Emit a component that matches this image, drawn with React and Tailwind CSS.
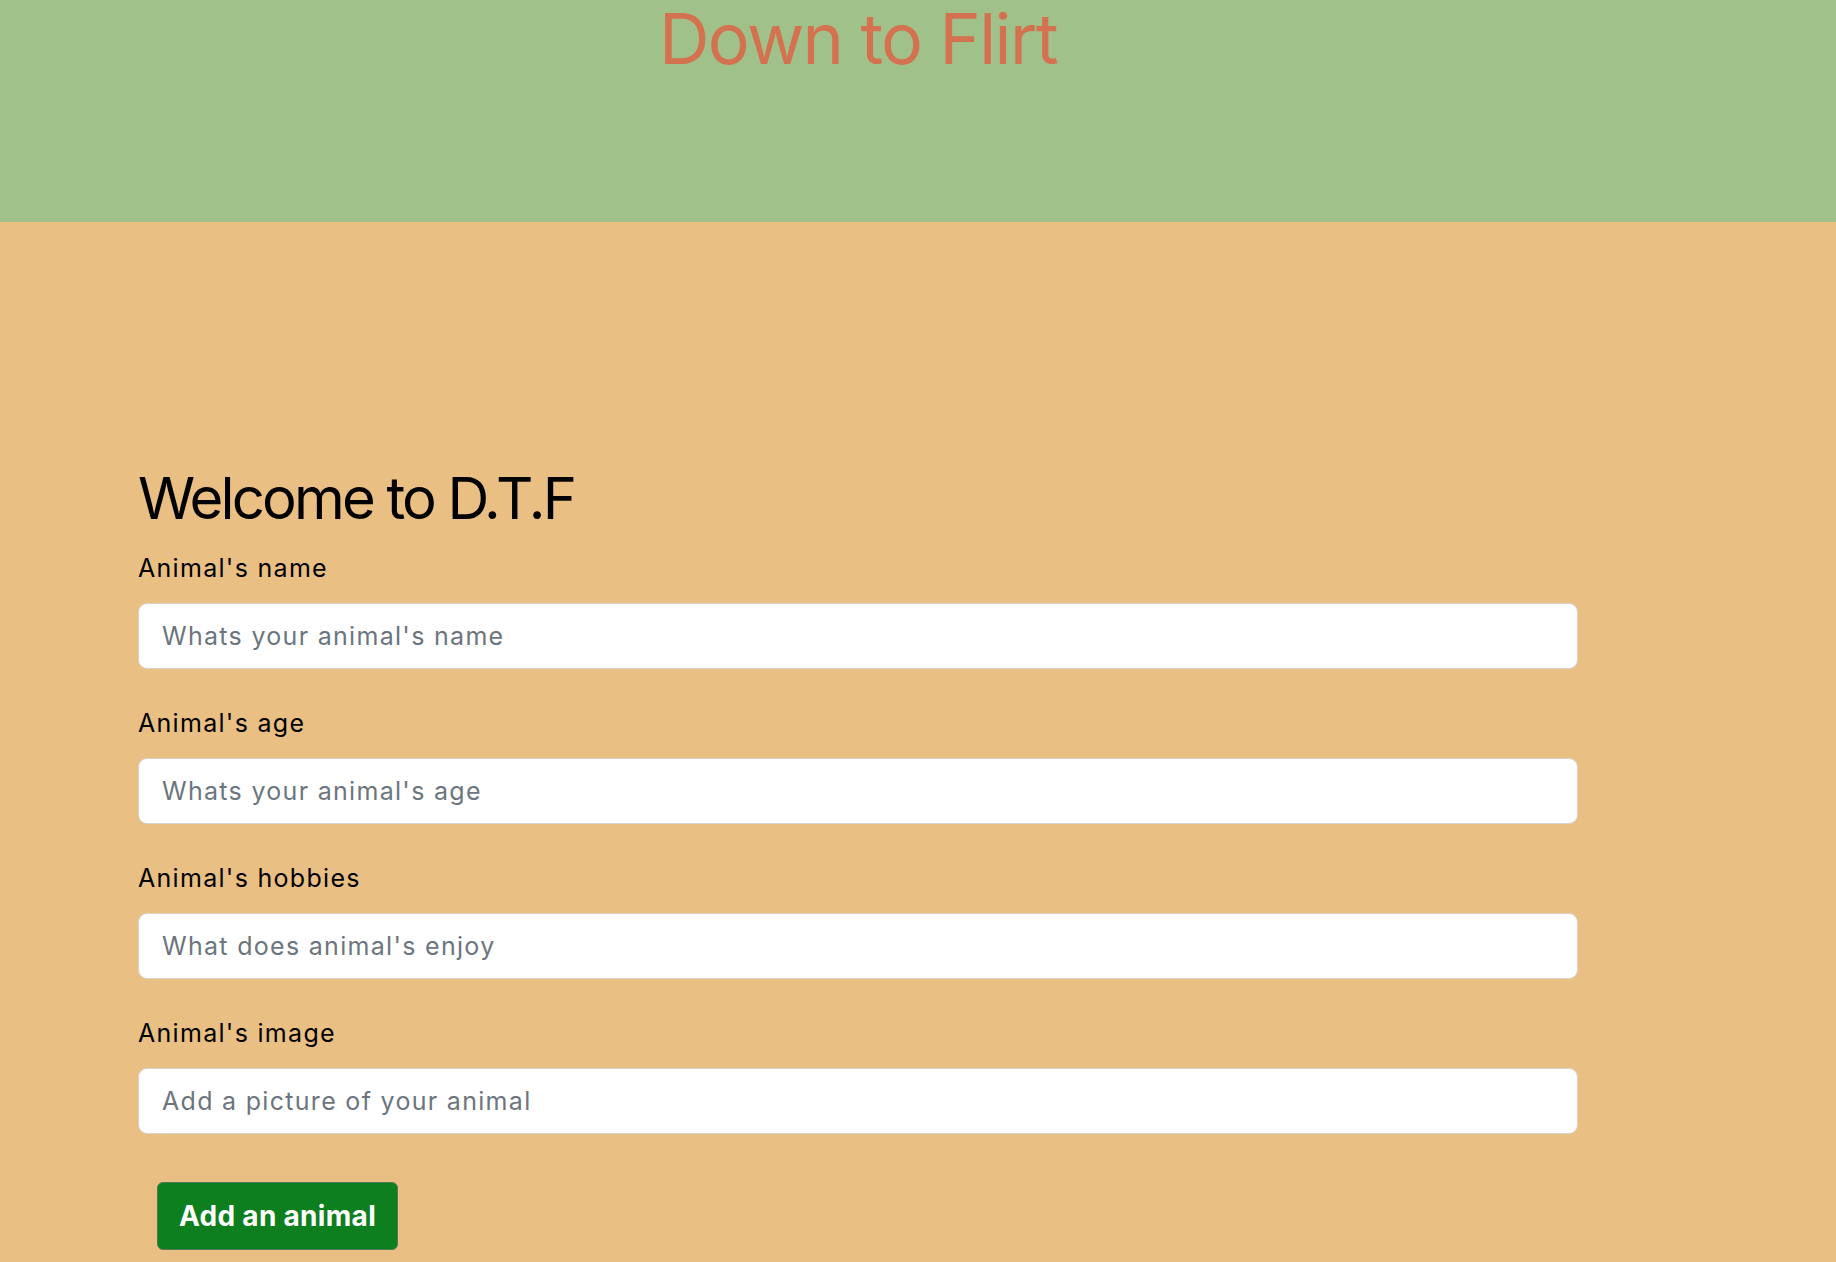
import { useState } from 'react';

const fields = [
  { id: 'name', label: "Animal's name", placeholder: "Whats your animal's name" },
  { id: 'age', label: "Animal's age", placeholder: "Whats your animal's age" },
  { id: 'hobbies', label: "Animal's hobbies", placeholder: "What does animal's enjoy" },
  { id: 'image', label: "Animal's image", placeholder: 'Add a picture of your animal' },
];

export default function App() {
  const [form, setForm] = useState({ name: '', age: '', hobbies: '', image: '' });

  return (
    <div className="min-h-screen bg-[#e9bf83] font-['Inter',Arial,sans-serif]">
      <header className="h-[222px] bg-[#a1c18b] flex justify-center pr-[120px]">
        <h1 className="text-[70px] leading-[1.1] tracking-[-1.6px] text-[#d4714f] font-normal">Down to Flirt</h1>
      </header>

      <main className="pt-[242px] pl-[138px]">
        <form className="w-[1440px]" onSubmit={(e) => e.preventDefault()}>
          <h2 className="text-[58px] leading-[1.2] tracking-[-2.8px] text-black mb-[16px]">Welcome to D.T.F</h2>
          {fields.map((f) => (
            <div key={f.id} className="mb-[35.5px]">
              <label htmlFor={f.id} className="block text-[25px] leading-[1.5] tracking-[1.3px] text-black mb-[16px]">
                {f.label}
              </label>
              <input
                id={f.id}
                value={form[f.id]}
                onChange={(e) => setForm({ ...form, [f.id]: e.target.value })}
                placeholder={f.placeholder}
                className="w-full h-[66px] bg-white border border-[#d6d3cf] rounded-[9px] px-[23px] text-[25px] tracking-[1.3px] text-[#212529] placeholder-[#6c757d] outline-none"
              />
            </div>
          ))}
          <button
            type="submit"
            className="ml-[19px] mt-[12px] w-[241px] h-[68px] bg-[#0e7f1e] border border-[#4d7a55] rounded-[6px] text-white font-bold text-[28px] tracking-[0.3px]"
          >
            Add an animal
          </button>
        </form>
      </main>
    </div>
  );
}
